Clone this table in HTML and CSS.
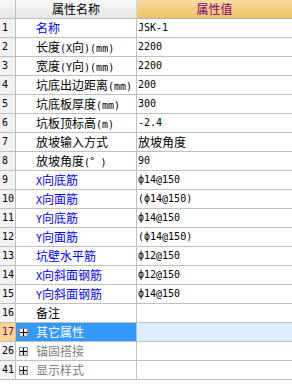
FILE: index.html
```html
<!DOCTYPE html>
<html lang="zh">
<head>
<meta charset="utf-8">
<link rel="stylesheet" href="styles.css">
</head>
<body>
<div class="grid">
  <div class="hd hd-num"></div>
  <div class="hd hd-name">属性名称</div>
  <div class="hd hd-val">属性值</div>

  <div class="num">1</div><div class="name blue">名称</div><div class="val">JSK-1</div>
  <div class="num">2</div><div class="name">长度<span class="lat">(X</span>向<span class="lat">)(mm)</span></div><div class="val">2200</div>
  <div class="num">3</div><div class="name">宽度<span class="lat">(Y</span>向<span class="lat">)(mm)</span></div><div class="val">2200</div>
  <div class="num">4</div><div class="name">坑底出边距离<span class="lat">(mm)</span></div><div class="val">200</div>
  <div class="num">5</div><div class="name">坑底板厚度<span class="lat">(mm)</span></div><div class="val">300</div>
  <div class="num">6</div><div class="name">坑板顶标高<span class="lat">(m)</span></div><div class="val">-2.4</div>
  <div class="num">7</div><div class="name">放坡输入方式</div><div class="val cjk">放坡角度</div>
  <div class="num">8</div><div class="name">放坡角度<span class="lat">(</span>°<span class="lat"> )</span></div><div class="val">90</div>
  <div class="num">9</div><div class="name blue"><span class="lat">X</span>向底筋</div><div class="val">ф14@150</div>
  <div class="num">10</div><div class="name blue"><span class="lat">X</span>向面筋</div><div class="val">(ф14@150)</div>
  <div class="num">11</div><div class="name blue"><span class="lat">Y</span>向底筋</div><div class="val">ф14@150</div>
  <div class="num">12</div><div class="name blue"><span class="lat">Y</span>向面筋</div><div class="val">(ф14@150)</div>
  <div class="num">13</div><div class="name blue">坑壁水平筋</div><div class="val">ф12@150</div>
  <div class="num">14</div><div class="name blue"><span class="lat">X</span>向斜面钢筋</div><div class="val">ф12@150</div>
  <div class="num">15</div><div class="name blue"><span class="lat">Y</span>向斜面钢筋</div><div class="val">ф14@150</div>
  <div class="num">16</div><div class="name">备注</div><div class="val"></div>

  <div class="num num-sel">17</div>
  <div class="group group-sel"><span class="plus"><svg width="7" height="7" viewBox="0 0 7 7"><path d="M0 3.5H7M3.5 0V7" stroke="#000" stroke-width="1"/></svg></span>其它属性</div>
  <div class="val val-sel"></div>

  <div class="num">26</div>
  <div class="group gray"><span class="plus"><svg width="7" height="7" viewBox="0 0 7 7"><path d="M0 3.5H7M3.5 0V7" stroke="#000" stroke-width="1"/></svg></span>锚固搭接</div>
  <div class="val"></div>

  <div class="num">41</div>
  <div class="group gray"><span class="plus"><svg width="7" height="7" viewBox="0 0 7 7"><path d="M0 3.5H7M3.5 0V7" stroke="#000" stroke-width="1"/></svg></span>显示样式</div>
  <div class="val"></div>
</div>
</body>
</html>
```

FILE: styles.css
```css
html, body {
  margin: 0;
  padding: 0;
  background: #ffffff;
}

.grid {
  display: grid;
  grid-template-columns: 16px 121px 1fr;
  grid-auto-rows: 19px;
  font-family: "Noto Sans CJK SC", "Liberation Sans", sans-serif;
  font-size: 12px;
  color: #000;
}

.grid > div {
  box-sizing: border-box;
  border-bottom: 1px solid #c0c0c0;
  line-height: 18px;
  white-space: nowrap;
  overflow: hidden;
}

.lat {
  font-family: "DejaVu Sans Mono", "Liberation Mono", monospace;
  font-size: 10px;
}

.hd {
  background: linear-gradient(#fafafa, #e6e6e6);
  text-align: center;
}

.hd-num,
.num {
  border-right: 1px solid #c0c0c0;
}

.hd-name {
  border-right: 1px solid #d8d8d8;
}

.hd-val {
  background: linear-gradient(#f9dca0, #f0c164);
  color: #800080;
  border-bottom: 1px solid #a9b8c6 !important;
}

.num {
  background: #f3f3f3;
  padding-left: 2px;
  font-family: "DejaVu Sans Mono", "Liberation Mono", monospace;
  font-size: 10px;
}

.num-sel {
  background: #fcd48e;
  color: #800080;
}

.name {
  border-right: 1px solid #c0c0c0;
  padding-left: 20px;
}

.blue {
  color: #0000ff;
}

.val {
  padding-left: 1px;
  font-family: "DejaVu Sans Mono", "Liberation Mono", "Noto Sans CJK SC", monospace;
  font-size: 10px;
}

.val.cjk {
  font-family: "Noto Sans CJK SC", sans-serif;
  font-size: 12px;
}

.group {
  border-right: 1px solid #c0c0c0;
  display: flex;
  align-items: center;
  padding-left: 3px;
}

.group-sel {
  background: #3399ff;
  color: #ffffff;
}

.val-sel {
  background: #ddeeff;
}

.gray {
  color: #808080;
}

.plus {
  box-sizing: border-box;
  width: 9px;
  height: 9px;
  border: 1px solid #8a8a8a;
  background: linear-gradient(#ffffff, #d4d4d4);
  display: flex;
  align-items: center;
  justify-content: center;
  margin-right: 8px;
}

.plus svg {
  display: block;
}
```
